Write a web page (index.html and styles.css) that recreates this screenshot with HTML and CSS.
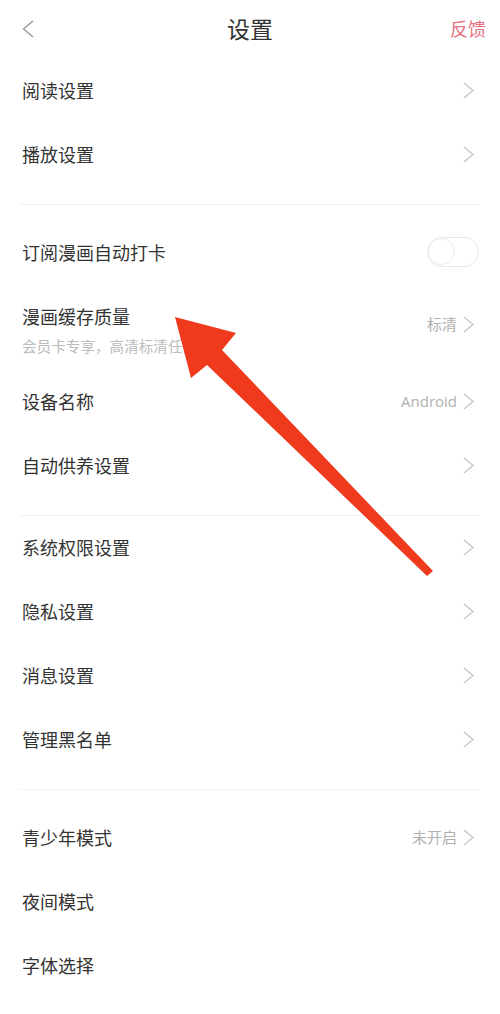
FILE: index.html
```html
<!DOCTYPE html>
<html lang="zh-CN">
<head>
<meta charset="utf-8">
<title>设置</title>
<link rel="stylesheet" href="styles.css">
</head>
<body>
<div class="page">
  <header class="topbar">
    <svg class="back" width="12" height="18" viewBox="0 0 12 18"><polyline points="11,1 1.5,9 11,17" fill="none" stroke="#9a9a9a" stroke-width="1.4"/></svg>
    <h1 class="title">设置</h1>
    <span class="feedback">反馈</span>
  </header>

  <div class="row"><span class="label">阅读设置</span><span class="right"><svg class="chev" width="11" height="17" viewBox="0 0 11 17"><polyline points="1,1 10,8.5 1,16" fill="none" stroke="#c6c6c6" stroke-width="1.4"/></svg></span></div>
  <div class="row"><span class="label">播放设置</span><span class="right"><svg class="chev" width="11" height="17" viewBox="0 0 11 17"><polyline points="1,1 10,8.5 1,16" fill="none" stroke="#c6c6c6" stroke-width="1.4"/></svg></span></div>

  <div class="sep"></div>

  <div class="row"><span class="label">订阅漫画自动打卡</span><span class="toggle"><span class="knob"></span></span></div>
  <div class="row tall">
    <div class="texts"><span class="label">漫画缓存质量</span><span class="sub">会员卡专享，高清标清任意选</span></div>
    <span class="right"><span class="value">标清</span><svg class="chev" width="11" height="17" viewBox="0 0 11 17"><polyline points="1,1 10,8.5 1,16" fill="none" stroke="#c6c6c6" stroke-width="1.4"/></svg></span>
  </div>
  <div class="row"><span class="label">设备名称</span><span class="right"><span class="value latin">Android</span><svg class="chev" width="11" height="17" viewBox="0 0 11 17"><polyline points="1,1 10,8.5 1,16" fill="none" stroke="#c6c6c6" stroke-width="1.4"/></svg></span></div>
  <div class="row"><span class="label">自动供养设置</span><span class="right"><svg class="chev" width="11" height="17" viewBox="0 0 11 17"><polyline points="1,1 10,8.5 1,16" fill="none" stroke="#c6c6c6" stroke-width="1.4"/></svg></span></div>

  <div class="sep tight"></div>

  <div class="row"><span class="label">系统权限设置</span><span class="right"><svg class="chev" width="11" height="17" viewBox="0 0 11 17"><polyline points="1,1 10,8.5 1,16" fill="none" stroke="#c6c6c6" stroke-width="1.4"/></svg></span></div>
  <div class="row"><span class="label">隐私设置</span><span class="right"><svg class="chev" width="11" height="17" viewBox="0 0 11 17"><polyline points="1,1 10,8.5 1,16" fill="none" stroke="#c6c6c6" stroke-width="1.4"/></svg></span></div>
  <div class="row"><span class="label">消息设置</span><span class="right"><svg class="chev" width="11" height="17" viewBox="0 0 11 17"><polyline points="1,1 10,8.5 1,16" fill="none" stroke="#c6c6c6" stroke-width="1.4"/></svg></span></div>
  <div class="row"><span class="label">管理黑名单</span><span class="right"><svg class="chev" width="11" height="17" viewBox="0 0 11 17"><polyline points="1,1 10,8.5 1,16" fill="none" stroke="#c6c6c6" stroke-width="1.4"/></svg></span></div>

  <div class="sep"></div>

  <div class="row"><span class="label">青少年模式</span><span class="right"><span class="value">未开启</span><svg class="chev" width="11" height="17" viewBox="0 0 11 17"><polyline points="1,1 10,8.5 1,16" fill="none" stroke="#c6c6c6" stroke-width="1.4"/></svg></span></div>
  <div class="row"><span class="label">夜间模式</span></div>
  <div class="row"><span class="label">字体选择</span></div>

  <svg class="arrow" width="500" height="1014" viewBox="0 0 500 1014">
    <polygon points="175,317 236,333 222,350 433,571 427,576 207,365 191,378" fill="#f03a1e"/>
  </svg>
</div>
</body>
</html>
```

FILE: styles.css
```css
html, body {
  margin: 0;
  padding: 0;
  background: #ffffff;
}

body {
  font-family: "Noto Sans CJK SC", "Noto Sans", sans-serif;
  color: #333333;
}

.page {
  position: relative;
  width: 500px;
  height: 1014px;
  overflow: hidden;
}

.topbar {
  height: 59px;
  display: flex;
  align-items: center;
  justify-content: space-between;
  padding: 0 14px 0 22px;
  box-sizing: border-box;
  position: relative;
}

.back {
  display: block;
  margin-top: -1px;
}

.title {
  position: absolute;
  left: 0;
  right: 0;
  top: 0;
  height: 57px;
  line-height: 57px;
  margin: 0;
  text-align: center;
  font-size: 23px;
  font-weight: 400;
  color: #333333;
  pointer-events: none;
}

.feedback {
  font-size: 18px;
  color: #e5707f;
  line-height: 57px;
  padding-bottom: 2px;
}

.row {
  height: 64px;
  display: flex;
  align-items: center;
  justify-content: space-between;
  padding: 0 26px 2px 22px;
  box-sizing: border-box;
}

.row.tall {
  height: 85px;
  padding-top: 19px;
  padding-bottom: 14px;
  align-items: flex-start;
}

.row.tall .right {
  align-self: center;
  margin-top: -12px;
}

.texts {
  display: flex;
  flex-direction: column;
  gap: 8px;
}

.label {
  font-size: 18px;
  line-height: 24px;
  color: #333333;
}

.sub {
  font-size: 14.6px;
  line-height: 20px;
  color: #bbbbbb;
}

.right {
  display: flex;
  align-items: center;
  gap: 6px;
}

.value {
  font-size: 15px;
  color: #b0b0b0;
  line-height: 20px;
}

.value.latin {
  font-family: "Open Sans", "Noto Sans", sans-serif;
  font-size: 15px;
}

.chev {
  display: block;
}

.toggle {
  width: 52px;
  height: 30px;
  border: 1.5px solid #e9e9e9;
  border-radius: 16px;
  box-sizing: border-box;
  margin-right: -5px;
  position: relative;
  background: #ffffff;
}

.knob {
  position: absolute;
  left: 0;
  top: 0;
  width: 27px;
  height: 27px;
  border-radius: 50%;
  border: 1px solid #ececec;
  box-sizing: border-box;
  background: #ffffff;
}

.sep {
  height: 1px;
  background: #f2f2f2;
  margin: 17px 20px 16px;
}

.sep.tight {
  margin-bottom: 0;
}

.arrow {
  position: absolute;
  left: 0;
  top: 0;
  pointer-events: none;
}
```
